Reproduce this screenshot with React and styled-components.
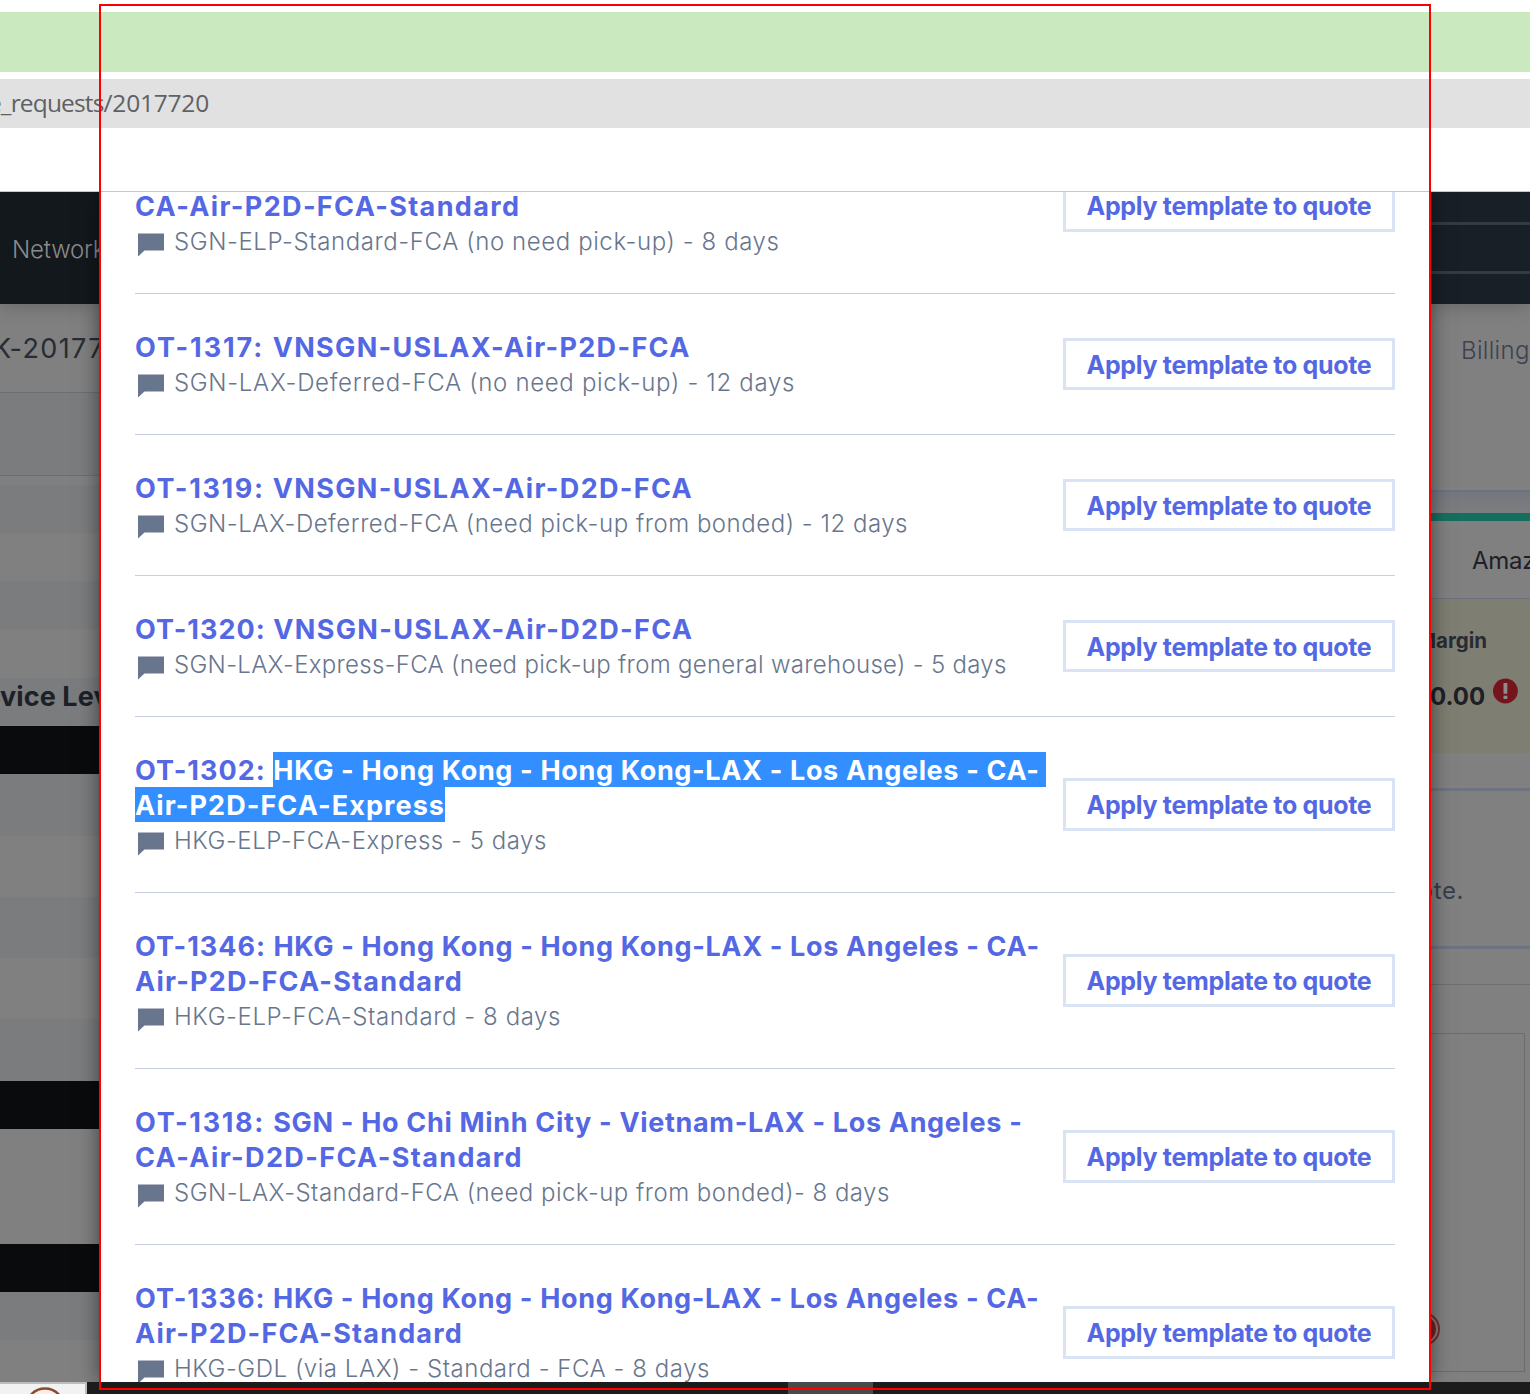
import React from "react";
import styled, { createGlobalStyle } from "styled-components";

const GlobalStyle = createGlobalStyle`
  * { box-sizing: border-box; }
  body { margin: 0; background: #fff; }
`;

const Page = styled.div`
  position: relative;
  display: flex;
  flex-direction: column;
  width: 1530px;
  height: 1394px;
  overflow: hidden;
  font-family: Inter, "Liberation Sans", sans-serif;
`;

const TabStrip = styled.div`
  flex: none;
  height: 60px;
  margin-top: 12px;
  background: #cae9bf;
`;

const AddressBar = styled.div`
  flex: none;
  display: flex;
  align-items: center;
  height: 49px;
  margin-top: 7px;
  padding-bottom: 2px;
  background: #e1e1e1;
`;

const Address = styled.div`
  display: flex;
  justify-content: flex-end;
  width: 209px;
  overflow: hidden;
  color: #5f6164;
  font: 400 24.5px/40px "Open Sans", "Noto Sans", sans-serif;
  letter-spacing: -0.85px;
  white-space: nowrap;
`;

const RequestId = styled.span`
  letter-spacing: -0.2px;
`;

const BookmarksBar = styled.div`
  flex: none;
  height: 64px;
  border-bottom: 1px solid #c8c8c8;
`;

const Viewport = styled.div`
  flex: none;
  display: flex;
  height: 1190px;
  overflow: hidden;
`;

const Pane = styled.div`
  flex: none;
  width: 100px;
  overflow: hidden;
  background: #808080;
  white-space: nowrap;
`;

const Nav = styled.div`
  position: relative;
  display: flex;
  flex-direction: column;
  justify-content: center;
  height: 112px;
  background: ${(p) => p.$color};
  box-shadow: 0 0 20px rgba(0, 0, 0, 0.25);
`;

const NavItem = styled.span`
  margin-left: 12px;
  margin-top: 3px;
  color: #8b8b8b;
  font-size: 24px;
  font-weight: 350;
  letter-spacing: -0.2px;
`;

const NavField = styled.div`
  height: 52px;
  border: solid #333b45;
  border-width: 3px 0;
`;

const QuoteNumber = styled.div`
  display: flex;
  justify-content: flex-end;
  height: 88px;
  margin-right: -5px;
  color: #272c35;
  font-size: 27px;
  line-height: 90px;
  letter-spacing: 1.4px;
`;

const SubHeader = styled.div`
  height: 84px;
  margin-bottom: 9px;
  border: solid #6c6e70;
  border-width: 1px 0;
  background: #7a7c7e;
`;

const Stripe = styled.div`
  height: ${(p) => p.$h}px;
  background: ${(p) => p.$color};
`;

const ColumnHead = styled.div`
  height: 48px;
  background: #7b7c7e;
  color: #1d2026;
  font-size: 27px;
  font-weight: 700;
  line-height: 38px;
  letter-spacing: 0.1px;
`;

const Modal = styled.main`
  position: relative;
  z-index: 1;
  flex: none;
  width: 1330px;
  padding: 0 35px;
  background: #fff;
  box-shadow: 0 0 20px rgba(0, 0, 0, 0.55);
`;

const Templates = styled.ul`
  margin: -74px 0 0;
  padding: 0;
  list-style: none;
`;

const Template = styled.li`
  display: flex;
  align-items: center;
  justify-content: space-between;
  padding: 35px 0;
  border-bottom: 1px solid #c5cfe1;
`;

const Title = styled.div`
  min-height: ${(p) => p.$lines * 35}px;
  display: flex;
  flex-direction: column;
  justify-content: flex-end;
  color: #5468e4;
  font-size: 27px;
  font-weight: 700;
  line-height: 37px;
  white-space: pre;
`;

const TitleLine = styled.div`
  height: 35px;
`;

const Run = styled.span`
  display: inline-block;
  height: 35px;
  vertical-align: top;
  letter-spacing: ${(p) => p.$ls}px;
  ${(p) => p.$marked && "background: #338fff; color: #fff;"}
  padding-right: ${(p) => p.$pad || 0}px;
`;

const Note = styled.div`
  display: flex;
  height: 35px;
  color: #68768d;
  font-size: 24px;
  font-weight: 350;
  line-height: 37px;
  letter-spacing: ${(p) => p.$ls}px;
  white-space: nowrap;
`;

const NoteIcon = styled.svg`
  flex: none;
  width: 26px;
  height: 24px;
  margin: 10px 10px 0 3px;
`;

const ApplyButton = styled.button`
  flex: none;
  display: block;
  width: 332px;
  height: 52.6px;
  padding: 3px 0 0;
  border: 3px solid #d9e3f4;
  background: #fff;
  color: #5468e4;
  font: 700 25px/43.6px Inter, "Liberation Sans", sans-serif;
  letter-spacing: -0.32px;
`;

const Billing = styled.div`
  height: 188px;
  padding: 28px 0 0 31px;
  border-bottom: 2px solid #6b7282;
  color: #3c424e;
  font-size: 24px;
  line-height: 37px;
  font-weight: 350;
  letter-spacing: 0.3px;
`;

const PanelGap = styled.div`
  height: 21px;
  background: linear-gradient(#74777e, #7c7d7f);
`;

const Customer = styled.div`
  height: 86px;
  padding: 20px 0 0 42px;
  border-top: 8px solid #166f5e;
  border-bottom: 1px solid #6d7078;
  color: #1d2027;
  font-size: 24px;
  line-height: 39px;
  letter-spacing: -0.3px;
`;

const MarginCard = styled.div`
  display: flex;
  flex-direction: column;
  height: 154px;
  padding: 26px 12px 0 0;
  background: #7f7e72;
  color: #272b33;
  font-weight: 700;
`;

const MarginLabel = styled.div`
  align-self: flex-end;
  margin-right: 31px;
  font-size: 20.5px;
  line-height: 32px;
`;

const MarginValue = styled.div`
  display: flex;
  align-items: center;
  justify-content: flex-end;
  gap: 8px;
  margin-top: 20px;
  color: #1d2027;
  font-size: 24px;
  line-height: 40px;
`;

const AlertIcon = styled.svg`
  width: 26px;
  height: 26px;
  margin-top: -13px;
`;

const Section = styled.div`
  height: ${(p) => p.$h}px;
  border-bottom: 3px solid #6d737f;
`;

const QuoteNote = styled.div`
  display: flex;
  justify-content: flex-end;
  padding: 80px 66px 0 0;
  color: #363e4a;
  font-size: 24px;
  line-height: 40px;
  letter-spacing: 0.6px;
`;

const Spacer = styled.div`
  height: 36px;
  border-bottom: 1px solid #6e6e6e;
`;

const Attachment = styled.div`
  display: flex;
  align-items: flex-end;
  height: 339px;
  margin: 48px 5px 0 0;
  padding-bottom: 25px;
  border: solid #6c6c6c;
  border-width: 1px 1px 1px 0;
`;

const Seal = styled.svg`
  width: 34px;
  height: 34px;
  margin-left: -24px;
`;

const Taskbar = styled.div`
  flex: none;
  display: flex;
  height: 12px;
  background: #1c1c1c;
`;

const TaskSearch = styled.div`
  width: 87px;
  height: 12px;
  margin-right: 701px;
  border: solid #bcbcbc;
  border-width: 2px 2px 0 0;
  background: #f2f2f2;
`;

const TaskIcon = styled.svg`
  display: block;
  margin-left: 25px;
`;

const ActiveTask = styled.div`
  width: 85px;
  background: #4a4a4a;
`;

const Annotation = styled.div`
  position: absolute;
  z-index: 2;
  left: 99px;
  top: 4px;
  width: 1332px;
  height: 1386px;
  border: 2px solid #ff0000;
`;

const route = "HKG - Hong Kong - Hong Kong-LAX - Los Angeles - CA-";

const templates = [
  {
    lines: 2,
    title: [[["CA-Air-P2D-FCA-Standard", 1.35]]],
    note: "SGN-ELP-Standard-FCA (no need pick-up) - 8 days",
    ls: 0.59,
  },
  {
    title: [[["OT-1317: ", 1.95], ["VNSGN-USLAX-Air-P2D-FCA", 1.33]]],
    note: "SGN-LAX-Deferred-FCA (no need pick-up) - 12 days",
    ls: 0.68,
  },
  {
    title: [[["OT-1319: ", 1.65], ["VNSGN-USLAX-Air-D2D-FCA", 1.35]]],
    note: "SGN-LAX-Deferred-FCA (need pick-up from bonded) - 12 days",
    ls: 0.52,
  },
  {
    title: [[["OT-1320: ", 1.05], ["VNSGN-USLAX-Air-D2D-FCA", 1.33]]],
    note: "SGN-LAX-Express-FCA (need pick-up from general warehouse) - 5 days",
    ls: 0.3,
  },
  {
    title: [[["OT-1302: ", 1.05], [route, 0.65, true, 6]], [["Air-P2D-FCA-Express", 1.08, true]]],
    note: "HKG-ELP-FCA-Express - 5 days",
    ls: 0.53,
  },
  {
    title: [[["OT-1346: ", 1.0], [route, 0.65]], [["Air-P2D-FCA-Standard", 1.2]]],
    note: "HKG-ELP-FCA-Standard - 8 days",
    ls: 0.58,
  },
  {
    title: [
      [["OT-1318: ", 1.7], ["SGN - Ho Chi Minh City - Vietnam-LAX - Los Angeles -", 0.67]],
      [["CA-Air-D2D-FCA-Standard", 1.38]],
    ],
    note: "SGN-LAX-Standard-FCA (need pick-up from bonded)- 8 days",
    ls: 0.47,
  },
  {
    title: [[["OT-1336: ", 1.05], [route, 0.65]], [["Air-P2D-FCA-Standard", 1.2]]],
    note: "HKG-GDL (via LAX) - Standard - FCA - 8 days",
    ls: 0.54,
  },
];

const grey = "#808080";
const tint = "#7b7c7e";
const black = "#090b0d";

const upperStripes = [[48, tint], [48, grey], [48, tint], [49, grey]];
const lowerStripes = [
  [48, black], [62, tint], [61, grey], [61, tint], [61, grey], [62, tint],
  [48, black], [115, grey], [48, black], [48, tint], [42, grey],
];

function TemplateRow({ item }) {
  return (
    <Template>
      <div>
        <Title $lines={item.lines || item.title.length}>
          {item.title.map((line, i) => (
            <TitleLine key={i}>
              {line.map(([text, ls, marked, pad]) => (
                <Run key={text} $ls={ls} $marked={marked} $pad={pad}>{text}</Run>
              ))}
            </TitleLine>
          ))}
        </Title>
        <Note $ls={item.ls}>
          <NoteIcon viewBox="0 0 26 24">
            <path d="M0 0.4H26V17.6H6.5L0 23.6Z" fill="#68768d" />
          </NoteIcon>
          {item.note}
        </Note>
      </div>
      <ApplyButton>Apply template to quote</ApplyButton>
    </Template>
  );
}

export default function App() {
  return (
    <Page>
      <GlobalStyle />
      <TabStrip />
      <AddressBar>
        <Address>
          e_requests<RequestId>/2017720</RequestId>
        </Address>
      </AddressBar>
      <BookmarksBar />
      <Viewport>
        <Pane>
          <Nav $color="#13181c">
            <NavItem>Network</NavItem>
          </Nav>
          <QuoteNumber>K-20177</QuoteNumber>
          <SubHeader />
          {upperStripes.map(([h, c], i) => <Stripe key={i} $h={h} $color={c} />)}
          <ColumnHead>vice Level</ColumnHead>
          {lowerStripes.map(([h, c], i) => <Stripe key={i} $h={h} $color={c} />)}
        </Pane>
        <Modal>
          <Templates>
            {templates.map((item, i) => <TemplateRow key={i} item={item} />)}
          </Templates>
        </Modal>
        <Pane>
          <Nav $color="#181f26">
            <NavField />
          </Nav>
          <Billing>Billing</Billing>
          <PanelGap />
          <Customer>Amaz</Customer>
          <MarginCard>
            <MarginLabel>Margin</MarginLabel>
            <MarginValue>
              0.00
              <AlertIcon viewBox="0 0 26 26">
                <circle cx="13" cy="13" r="13" fill="#74151d" />
                <path d="M11 4.5h4V16h-4zM11 18h4v3.5h-4z" fill="#918a8a" />
              </AlertIcon>
            </MarginValue>
          </MarginCard>
          <Section $h={38} />
          <Section $h={158}>
            <QuoteNote>quote.</QuoteNote>
          </Section>
          <Spacer />
          <Attachment>
            <Seal viewBox="0 0 34 34">
              <circle cx="17" cy="17" r="16" fill="none" stroke="#792c2c" strokeWidth="2" />
              <circle cx="17" cy="17" r="13" fill="#6e2424" />
            </Seal>
          </Attachment>
        </Pane>
      </Viewport>
      <Taskbar>
        <TaskSearch>
          <TaskIcon width="40" height="10" viewBox="0 0 40 10">
            <circle cx="20" cy="23.5" r="19" fill="#f7efe8" stroke="#8a4a2e" strokeWidth="2.4" />
          </TaskIcon>
        </TaskSearch>
        <ActiveTask />
      </Taskbar>
      <Annotation />
    </Page>
  );
}
